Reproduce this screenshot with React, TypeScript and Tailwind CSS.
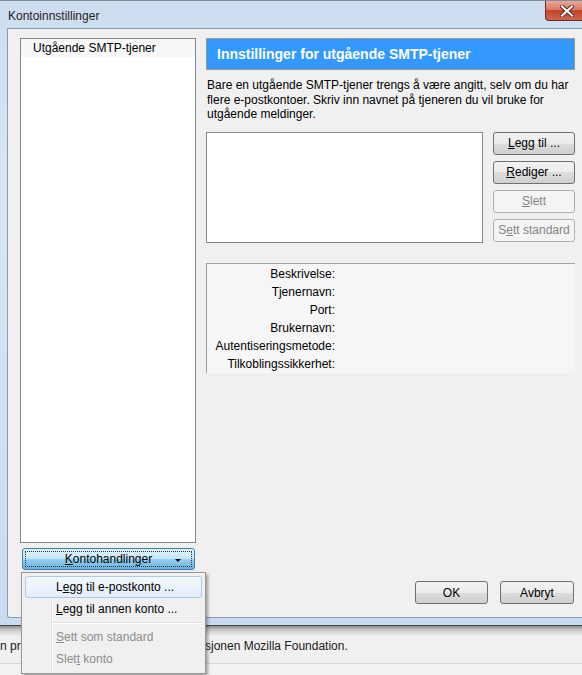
import React from "react"

const btn =
  "h-[23px] rounded-[3px] border border-[#707070] bg-[linear-gradient(#f2f2f2,#ebebeb_50%,#dddddd_50%,#cfcfcf)] text-[12px] text-black flex items-center justify-center"
const btnOff =
  "h-[23px] rounded-[3px] border border-[#adb2b5] bg-[#f4f4f4] text-[12px] text-[#838383] flex items-center justify-center"

const details = [
  "Beskrivelse:",
  "Tjenernavn:",
  "Port:",
  "Brukernavn:",
  "Autentiseringsmetode:",
  "Tilkoblingssikkerhet:",
]

function CloseButton() {
  return (
    <div className="w-[43px] h-[20px] mr-[12px] self-start rounded-b-[4px] border border-t-0 border-[#6d2a22] bg-[linear-gradient(#e9a99b,#d87a66_45%,#c2442c_50%,#d0644b)] flex items-center justify-center">
      <svg width="14" height="12" viewBox="0 0 14 12">
        <path d="M2 1.5 L12 10.5 M12 1.5 L2 10.5" stroke="#5a1d16" strokeWidth="4" strokeLinecap="square" />
        <path d="M2 1.5 L12 10.5 M12 1.5 L2 10.5" stroke="#ffffff" strokeWidth="2.2" strokeLinecap="square" />
      </svg>
    </div>
  )
}

export default function App() {
  return (
    <div className="relative w-[582px] h-[675px] overflow-hidden bg-[#f0f0f0] font-['Liberation_Sans',Arial,sans-serif] text-[12px] text-black">
      {/* Dialog window */}
      <div className="w-[600px] h-[626px] flex flex-col bg-[linear-gradient(#cddcf0,#d9e5f4_30%,#c9dbf0)] border-b border-[#3f4a55]">
        {/* Title bar */}
        <div className="h-[28px] flex items-center border-t border-[#7f8c9a]">
          <span className="pl-[8px] pt-[2px] text-[12px] text-[#1e1e1e]">Kontoinnstillinger</span>
          <div className="flex-1" />
          <CloseButton />
        </div>

        {/* Client area */}
        <div className="ml-[7px] h-[590px] flex bg-[#f0f0f0] border-l border-t border-b border-[#8a9bb0] rounded-bl-[3px] pl-[12px] pt-[9px] pb-[13px]">
          {/* Left column */}
          <div className="w-[176px] flex flex-col">
            <div className="h-[505px] bg-white border border-[#828790]">
              <div className="h-[18px] bg-[#f7f7f7] pl-[12px] flex items-center">Utgående SMTP-tjener</div>
            </div>
            <div className="mt-[5px] ml-[2px] w-[173px] h-[22px] rounded-[3px] border border-[#3c7fb1] bg-[linear-gradient(#e5f4fc,#c4e5f6_50%,#98d1ef_50%,#68b3db)] p-[2px]">
              <div className="h-full border border-dotted border-[#2a3440] flex items-center relative">
                <span className="flex-1 text-center">
                  <span className="underline">K</span>ontohandlinger
                </span>
                <span className="absolute right-[10px] top-[7px] w-0 h-0 border-l-[3px] border-r-[3px] border-t-[3px] border-l-transparent border-r-transparent border-t-black" />
              </div>
            </div>
          </div>

          {/* Right column */}
          <div className="ml-[10px] w-[369px] flex flex-col">
            <div className="h-[32px] bg-[#3399ff] border border-[#9a9a9a] flex items-center pl-[10px] text-[14px] font-bold text-white">
              Innstillinger for utgående SMTP-tjener
            </div>
            <p className="mt-[8px] pl-[1px] leading-[14.5px] text-[12px]">
              Bare en utgående SMTP-tjener trengs å være angitt, selv om du har flere e-postkontoer. Skriv inn navnet på tjeneren du vil bruke for utgående meldinger.
            </p>

            <div className="mt-[10px] flex">
              <div className="w-[277px] h-[111px] bg-white border border-[#828790]" />
              <div className="ml-[10px] w-[82px] flex flex-col gap-[6px]">
                <div className={btn}>
                  <span><span className="underline">L</span>egg til ...</span>
                </div>
                <div className={btn}>
                  <span><span className="underline">R</span>ediger ...</span>
                </div>
                <div className={btnOff}>
                  <span><span className="underline">S</span>lett</span>
                </div>
                <div className={btnOff}>
                  <span>S<span className="underline">e</span>tt standard</span>
                </div>
              </div>
            </div>

            <div className="mt-[20px] h-[110px] bg-[#f6f6f6] border-t border-l border-[#a0a0a0] pt-[1px]">
              {details.map((d) => (
                <div key={d} className="h-[18px] flex items-center">
                  <span className="w-[128px] text-right">{d}</span>
                </div>
              ))}
            </div>

            <div className="flex-1" />
            <div className="flex justify-end gap-[12px] pr-[1px]">
              <div className={`${btn} w-[73px]`}>OK</div>
              <div className={`${btn} w-[74px]`}>Avbryt</div>
            </div>
          </div>
        </div>
      </div>

      {/* Window behind */}
      <div className="h-[10px] bg-[linear-gradient(#8d8d8d,#c9c9c9_40%,#f0f0f0)]" />
      <div className="h-[20px] flex items-center text-[#1a1a1a] text-[12px] whitespace-nowrap">
        <span className="w-[205px]">n pr</span>
        <span>sjonen Mozilla Foundation.</span>
      </div>
      <div className="h-[7px]" />
      <div className="h-[13px] border-t border-[#d6d3d3] bg-[#f5f2f2]" />

      {/* Dropdown menu */}
      <div className="absolute left-[21px] top-[572px] w-[185px] h-[102px] border border-[#979797] shadow-[2px_2px_3px_rgba(0,0,0,0.35)] bg-[linear-gradient(to_right,#f0f0f0_29px,#e2e3e3_29px,#e2e3e3_30px,#ffffff_30px,#ffffff_31px,#f0f0f0_31px)] p-[3px]">
        <div className="h-[22px] rounded-[3px] border border-[#a8caf0] bg-[linear-gradient(#f3f8fe,#e3eefc)] flex items-center pl-[30px]">
          <span>L<span className="underline">e</span>gg til e-postkonto ...</span>
        </div>
        <div className="h-[22px] flex items-center pl-[31px]">
          <span><span className="underline">L</span>egg til annen konto ...</span>
        </div>
        <div className="ml-[27px] my-[2px] h-[2px] border-t border-[#e0e0e0] border-b border-b-white" />
        <div className="h-[22px] flex items-center pl-[31px] text-[#8d8d8d]">
          <span><span className="underline">S</span>ett som standard</span>
        </div>
        <div className="h-[22px] flex items-center pl-[31px] text-[#8d8d8d]">
          <span>Slet<span className="underline">t</span> konto</span>
        </div>
      </div>
    </div>
  )
}
